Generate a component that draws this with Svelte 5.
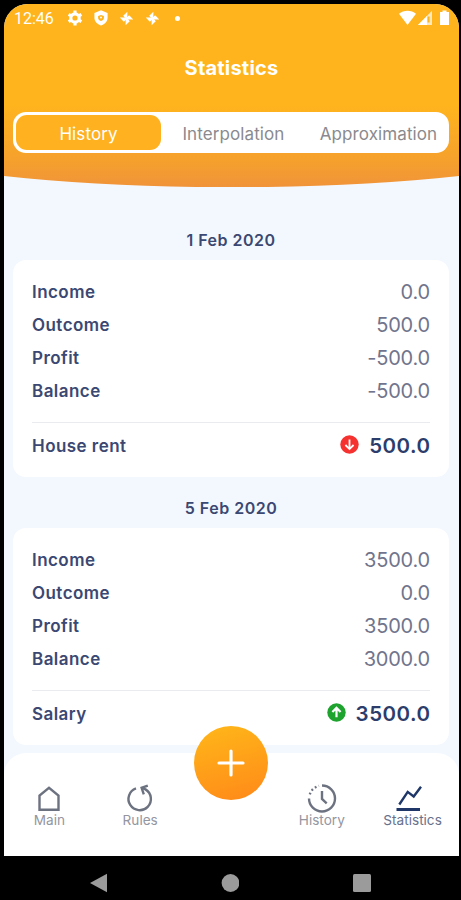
<script>
  let activeTab = $state("History");

  const tabs = ["History", "Interpolation", "Approximation"];

  const days = [
    {
      date: "1 Feb 2020",
      totals: [
        ["Income", "0.0"],
        ["Outcome", "500.0"],
        ["Profit", "-500.0"],
        ["Balance", "-500.0"]
      ],
      rule: { name: "House rent", amount: "500.0", income: false }
    },
    {
      date: "5 Feb 2020",
      totals: [
        ["Income", "3500.0"],
        ["Outcome", "0.0"],
        ["Profit", "3500.0"],
        ["Balance", "3000.0"]
      ],
      rule: { name: "Salary", amount: "3500.0", income: true }
    }
  ];
</script>

{#snippet pinwheel()}
  <svg class="pinwheel" width="15" height="15" viewBox="0 0 15 15" fill="#fff">
    <path d="M7 8L4.200 4.800 8.400 .8V7z" />
    <path d="M7 7l3.200-2.800 4 4.200H8z" />
    <path d="M8 7l2.800 3.200-4.200 4V8z" />
    <path d="M8 8l-3.200 2.800-4-4.200H7z" />
  </svg>
{/snippet}

<div class="phone">
  <div class="screen">
    <header>
      <svg class="curve" viewBox="0 0 455 183" preserveAspectRatio="none">
        <defs>
          <linearGradient id="head" x1="0" y1="0" x2="0" y2="1">
            <stop offset="0.55" stop-color="#ffb41d" />
            <stop offset="0.86" stop-color="#f5a02d" />
            <stop offset="1" stop-color="#f0933a" />
          </linearGradient>
        </defs>
        <path d="M0 0H455V172C320 187 135 187 0 172z" fill="url(#head)" />
      </svg>

      <div class="status">
        <span class="clock">12:46</span>
        <svg class="gear" width="16" height="16" viewBox="0 0 16 16">
          <circle cx="8" cy="8" r="4.200" fill="none" stroke="#fff" stroke-width="3.200" />
          <path d="M8 .6v3M8 12.400v3M1.600 4.300l2.600 1.500M11.800 10.200l2.600 1.500M1.600 11.700l2.600-1.500M11.800 5.800l2.600-1.500" stroke="#fff" stroke-width="3.200" />
        </svg>
        <svg class="shield" width="14" height="16" viewBox="0 0 14 16">
          <path d="M7 .3L13.600 3v4.600c0 3.800-2.800 6.800-6.600 8-3.800-1.200-6.600-4.200-6.600-8V3z" fill="#fff" />
          <path d="M7 5l2.900 1v2c0 1.400-1.100 2.300-2.900 3-1.800-.7-2.900-1.600-2.900-3V6z" fill="#ffb41d" />
          <circle cx="7" cy="7.500" r="1" fill="#fff" />
        </svg>
        {@render pinwheel()}
        {@render pinwheel()}
        <i class="dot"></i>
        <svg class="signals" width="52" height="16" viewBox="0 0 52 16">
          <path d="M0 3.800C4.500-.2 12.500-.2 17 3.800L8.500 15z" fill="#fff" />
          <path d="M33 0.800V15H19z" fill="#fff" opacity=".7" />
          <path d="M28 6V15H19z" fill="#fff" />
          <path d="M29.500 6.500v6" stroke="#ffb41d" stroke-width="2" />
          <path d="M41 2h2.500V.5h4V2H50v13h-9z" fill="#fff" />
        </svg>
      </div>

      <h1>Statistics</h1>

      <div class="tabs">
        {#each tabs as tab}
          <button class:active={tab === activeTab} onclick={() => (activeTab = tab)}>{tab}</button>
        {/each}
      </div>
    </header>

    <main>
      {#each days as day}
        <h2>{day.date}</h2>
        <section class="card">
          {#each day.totals as [label, value]}
            <div class="row">
              <span class="label">{label}</span>
              <span class="value">{value}</span>
            </div>
          {/each}
          <div class="rule">
            <span class="label">{day.rule.name}</span>
            <svg width="19" height="19" viewBox="0 0 19 19">
              <circle cx="9.500" cy="9.500" r="9.200" fill={day.rule.income ? "#1fa32f" : "#f5322f"} />
              <path
                d={day.rule.income ? "M9.500 14.300V5M5.400 9l4.100-4.100L13.600 9" : "M9.500 4.500V14M5.400 10l4.100 4.100 4.100-4.100"}
                fill="none"
                stroke="#fff"
                stroke-width={day.rule.income ? 2.2 : 1.8}
              />
            </svg>
            <span class="amount">{day.rule.amount}</span>
          </div>
        </section>
      {/each}
    </main>

    <nav>
      <a href="#main">
        <svg width="30" height="30" viewBox="0 0 30 30">
          <path d="M5.500 26.800V12.500L15 4.800l9.500 7.700v14.300z" />
        </svg>
        Main
      </a>
      <a href="#rules">
        <svg width="30" height="30" viewBox="0 0 30 30">
          <path d="M11 5.400A11.200 11.200 0 1 0 20.500 6.400L16.800 5" />
          <path d="M22.800 2.600L16.600 4.800l2.200 6.600" />
        </svg>
        Rules
      </a>
      <button class="add" aria-label="Add">
        <svg width="28" height="28" viewBox="0 0 28 28">
          <path d="M14 2v24M2 14h24" />
        </svg>
      </button>
      <a href="#history">
        <svg width="30" height="30" viewBox="0 0 30 30">
          <path d="M15 2.500A13 13 0 1 1 2 15.500" />
          <path d="M2.800 11.300A13 13 0 0 1 12 2.800" stroke-dasharray="1.800 2.400" />
          <path d="M15 8V16l4.700 4.300" />
        </svg>
        History
      </a>
      <a href="#statistics" class="current">
        <svg width="30" height="30" viewBox="0 0 30 30">
          <path d="M-1.500 26.500H22" stroke-width="3" />
          <path d="M1.300 21.500L9.700 8.900l6 4.600L23 3.700" />
        </svg>
        Statistics
      </a>
    </nav>
  </div>

  <footer>
    <svg width="18" height="20" viewBox="0 0 18 20"><path d="M18 .8v18.400L1 10z" /></svg>
    <svg width="18" height="20" viewBox="0 0 18 20"><circle cx="9.500" cy="10" r="8.900" /></svg>
    <svg width="18" height="20" viewBox="0 0 18 20"><rect y="1" width="18" height="18" rx="1.500" /></svg>
  </footer>
</div>

<style>
  :global(body) {
    margin: 0;
    background: #000;
  }

  .phone {
    box-sizing: border-box;
    width: 461px;
    height: 900px;
    padding: 4px 2px 0 4px;
    background: #000;
    font-family: Inter, "Liberation Sans", sans-serif;
    color: #3b4872;
    overflow: hidden;
  }

  .screen {
    display: flex;
    flex-direction: column;
    height: 852px;
    border-radius: 24px 24px 0 0;
    background: #f3f8ff;
    overflow: hidden;
  }

  header {
    position: relative;
    flex: none;
    height: 183px;
  }

  .curve {
    position: absolute;
    inset: 0;
    width: 100%;
    height: 183px;
  }

  .status {
    position: relative;
    display: flex;
    align-items: center;
    height: 28px;
    padding: 0 8px 0 10px;
  }

  .clock {
    width: 53px;
    font-family: Roboto, sans-serif;
    font-size: 16px;
    color: #fff;
  }

  .shield {
    margin: 0 11px 0 11px;
  }

  .pinwheel {
    margin-right: 11px;
  }

  .dot {
    width: 5px;
    height: 5px;
    margin-left: 4px;
    border-radius: 50%;
    background: #fff;
  }

  .signals {
    margin-left: auto;
  }

  h1 {
    position: relative;
    margin: 22px 0 0;
    font-size: 20px;
    line-height: 28px;
    font-weight: 700;
    letter-spacing: 0.2px;
    text-align: center;
    color: #fff;
  }

  .tabs {
    position: relative;
    display: flex;
    box-sizing: border-box;
    height: 41px;
    margin: 30px 10px 0 9px;
    padding: 3px;
    border-radius: 13px;
    background: #fff;
  }

  .tabs button {
    flex: none;
    width: 145px;
    padding: 2px 0 0;
    border: 0;
    border-radius: 11px;
    background: none;
    font: 400 17px Inter, sans-serif;
    letter-spacing: 0.1px;
    color: #8a8a8e;
  }

  .tabs .active {
    background: #ffb11f;
    color: #fff;
  }

  main {
    flex: 1;
    padding: 42px 10px 0 9px;
  }

  h2 {
    margin: 0;
    font-size: 16px;
    line-height: 22px;
    font-weight: 600;
    letter-spacing: 0.5px;
    text-align: center;
  }

  .card {
    box-sizing: border-box;
    height: 217px;
    margin: 9px 0 20px;
    padding: 15px 19px 0;
    border-radius: 13px;
    background: #fff;
  }

  .card:last-child {
    margin-bottom: 8px;
  }

  .row {
    display: flex;
    align-items: center;
    justify-content: space-between;
    height: 33px;
  }

  .label {
    font-size: 17px;
    font-weight: 600;
    letter-spacing: 0.45px;
  }

  .value {
    font-size: 20px;
    letter-spacing: -0.2px;
    color: #70758d;
  }

  .rule {
    display: flex;
    align-items: center;
    height: 45px;
    margin-top: 15px;
    border-top: 1px solid #e9ebef;
  }

  .rule svg {
    margin: -2px 0 0 auto;
  }

  .amount {
    margin: 0 -0.5px 0 10px;
    font-size: 20.5px;
    font-weight: 600;
    letter-spacing: 0.5px;
    color: #2c3d6c;
  }

  nav {
    position: relative;
    display: grid;
    grid-template-columns: repeat(5, 90.8px);
    flex: none;
    height: 103px;
    border-radius: 22px 22px 0 0;
    background: #fff;
  }

  nav a {
    display: flex;
    flex-direction: column;
    align-items: center;
    padding-top: 30px;
    font-size: 13.6px;
    line-height: 15px;
    color: #9496a0;
    text-decoration: none;
  }

  nav a svg {
    fill: none;
    stroke: #6d7280;
    stroke-width: 2.4;
    overflow: visible;
  }

  nav .current {
    color: #68718c;
  }

  nav .current svg {
    stroke: #1f3768;
  }

  .add {
    display: grid;
    place-items: center;
    justify-self: center;
    width: 74px;
    height: 74px;
    margin-top: -27px;
    padding: 0;
    border: 0;
    border-radius: 50%;
    background: linear-gradient(165deg, #ffb319 10%, #ff8b19 95%);
  }

  .add svg {
    stroke: #fff;
    stroke-width: 3.2;
    stroke-linecap: round;
  }

  footer {
    display: flex;
    justify-content: space-between;
    padding: 17px 88px 0 85px;
  }

  footer svg {
    fill: #9b9b9b;
  }
</style>
